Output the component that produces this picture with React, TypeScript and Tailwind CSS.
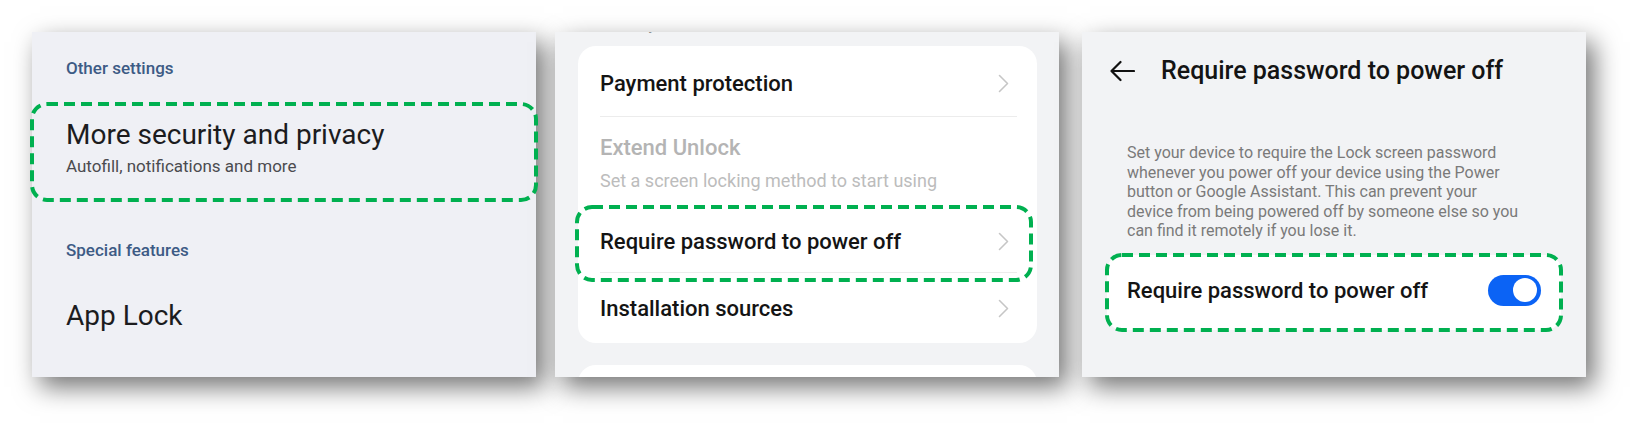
import React from 'react'

const font = { fontFamily: 'Roboto, "Noto Sans", sans-serif' }

function Dashed({ className }: { className: string }) {
  return (
    <svg className={`pointer-events-none absolute z-10 overflow-visible ${className}`}>
      <rect x="0" y="0" width="100%" height="100%" rx="15" fill="none" stroke="#00b050" strokeWidth="4" strokeDasharray="11 6" />
    </svg>
  )
}

function Chevron() {
  return (
    <svg width="11" height="19" viewBox="0 0 11 19" className="shrink-0">
      <path d="M1.5 1.5 L9.5 9.5 L1.5 17.5" fill="none" stroke="#c6c6c6" strokeWidth="1.6" strokeLinecap="round" strokeLinejoin="round" />
    </svg>
  )
}

function Divider() {
  return <div className="h-px shrink-0 bg-[#ececec] ml-[22px] mr-[20px]" />
}

const panel = 'w-[504px] h-[345px] shrink-0 shadow-[8px_10px_24px_rgba(0,0,0,0.55)]'

export default function App() {
  return (
    <div className="w-[1651px] h-[442px] bg-white flex items-start pl-[32px] pt-[32px]" style={font}>
      {/* left: settings list */}
      <div className={`${panel} bg-[#eff0f5] flex flex-col`}>
        <div className="pl-[34px] pt-[24px] text-[17px] leading-[24px] font-medium text-[#3d5b85]">Other settings</div>
        <div className="relative mt-[24px] h-[96px] pl-[34px] pt-[14px]">
          <Dashed className="inset-0 w-full h-full" />
          <div className="text-[28px] leading-[34px] text-[#1c1c1e]">More security and privacy</div>
          <div className="mt-[3px] text-[17px] leading-[22px] text-[#4b4b4f]">Autofill, notifications and more</div>
        </div>
        <div className="pl-[34px] mt-[38px] text-[17px] leading-[24px] font-medium text-[#3d5b85]">Special features</div>
        <div className="pl-[34px] mt-[37px] text-[28px] leading-[34px] text-[#1c1c1e]">App Lock</div>
      </div>

      {/* middle: security list */}
      <div className={`${panel} ml-[19px] bg-[#f2f3f5] overflow-hidden flex flex-col pl-[23px] pr-[22px]`}>
        <div className="h-[14px] shrink-0 overflow-hidden">
          <div className="-mt-[17px] pl-[24px] text-[15px] leading-[20px] text-[#8c8c8c]">Security</div>
        </div>
        <div className="bg-white rounded-[18px] h-[297px] shrink-0 flex flex-col">
          <div className="h-[70px] shrink-0 flex items-center justify-between pl-[22px] pr-[28px] pt-[4px]">
            <span className="text-[22px] font-medium text-[#141414]">Payment protection</span>
            <Chevron />
          </div>
          <Divider />
          <div className="h-[90px] shrink-0 pl-[22px] pt-[17px]">
            <div className="text-[22px] leading-[28px] font-medium text-[#b4b4b4]">Extend Unlock</div>
            <div className="mt-[7px] text-[18px] leading-[24px] text-[#bcbcbc]">Set a screen locking method to start using</div>
          </div>
          <div className="relative h-[65px] shrink-0 flex items-center justify-between pl-[22px] pr-[28px] pt-[3px]">
            <Dashed className="-left-[1px] top-0 w-[454px] h-[73px]" />
            <span className="text-[22px] font-medium text-[#141414]">Require password to power off</span>
            <Chevron />
          </div>
          <Divider />
          <div className="h-[70px] shrink-0 flex items-center justify-between pl-[22px] pr-[28px]">
            <span className="text-[22px] font-medium text-[#141414]">Installation sources</span>
            <Chevron />
          </div>
        </div>
        <div className="mt-[22px] bg-white rounded-[18px] h-[60px] shrink-0" />
      </div>

      {/* right: detail page */}
      <div className={`${panel} ml-[23px] bg-[#f2f3f5] flex flex-col`}>
        <div className="pl-[27px] pt-[25px] h-[53px] shrink-0 flex items-center">
          <svg width="26" height="22" viewBox="0 0 26 22" className="shrink-0">
            <path d="M25 11H2.5M11.5 2L2.5 11l9 9" fill="none" stroke="#111" strokeWidth="2.2" strokeLinecap="round" strokeLinejoin="round" />
          </svg>
          <span className="ml-[26px] text-[25px] leading-[28px] font-medium text-[#141414]">Require password to power off</span>
        </div>
        <div className="mt-[58px] pl-[45px] text-[16px] leading-[19.5px] text-[#7a7a7a]">
          Set your device to require the Lock screen password<br />
          whenever you power off your device using the Power<br />
          button or Google Assistant. This can prevent your<br />
          device from being powered off by someone else so you<br />
          can find it remotely if you lose it.
        </div>
        <div className="relative mt-[14px] ml-[25px] w-[454px] h-[75px] shrink-0 bg-white rounded-[15px] flex items-center justify-between pl-[20px] pr-[20px] pb-[4px]">
          <Dashed className="inset-0 w-full h-full" />
          <span className="text-[22px] font-medium text-[#141414]">Require password to power off</span>
          <div className="w-[53px] h-[31px] rounded-full bg-[#0b63f5] flex items-center justify-end pr-[4px]">
            <div className="w-[24px] h-[24px] rounded-full bg-white" />
          </div>
        </div>
      </div>
    </div>
  )
}
